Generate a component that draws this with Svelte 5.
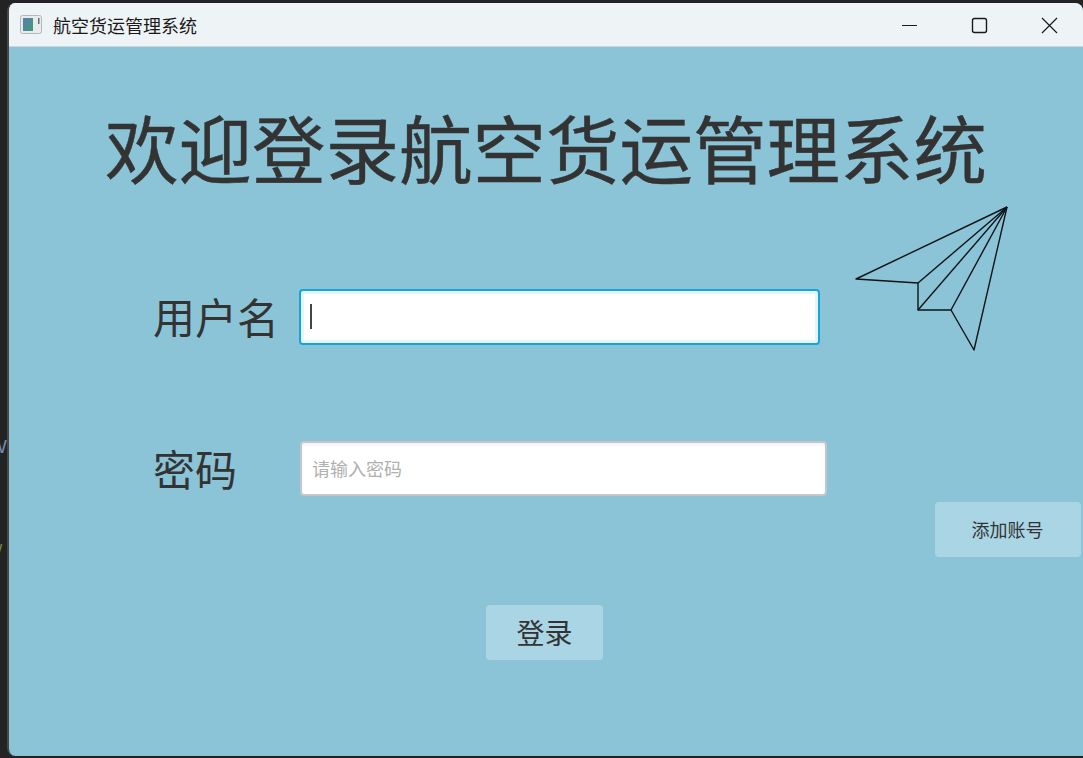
<script lang="ts">
	// Plane outline, one line per fold
	const planeLines = [
		'M152 2 L1 74 L63 78 L63 105 L96 105 L119 145 L152 2',
		'M152 2 L63 78',
		'M152 2 L63 105',
		'M152 2 L96 105'
	]
</script>


<div class="desktop">
	<div class="backdrop-text">
		<span class="stray-w">W</span>
		<span class="stray-mark">/</span>
	</div>

	<main class="window">
		<header class="titlebar">
			<svg class="app-icon" width="22" height="20" viewBox="0 0 22 20">
				<defs>
					<linearGradient id="icon-fill" x1="0" y1="0" x2="1" y2="1">
						<stop offset="0" stop-color="#5b7fa8" />
						<stop offset="1" stop-color="#3f9a80" />
					</linearGradient>
				</defs>
				<rect x="0.5" y="0.5" width="21" height="18" rx="2" fill="#e9eaea" stroke="#b4b8ba" />
				<rect x="3" y="3" width="10" height="13" fill="url(#icon-fill)" />
				<rect x="18" y="3" width="1.5" height="6" fill="#5f6f78" />
			</svg>
			<span class="title">航空货运管理系统</span>

			<div class="controls">
				<svg width="70" height="20" viewBox="0 0 70 20">
					<path d="M28 10.5 H43" stroke="#1a1a1a" stroke-width="1.2" fill="none" />
				</svg>
				<svg width="70" height="20" viewBox="0 0 70 20">
					<rect x="28.5" y="3.5" width="14" height="14" rx="2" stroke="#1a1a1a" stroke-width="1.4" fill="none" />
				</svg>
				<svg width="70" height="20" viewBox="0 0 70 20">
					<path d="M28 3 L43 18 M43 3 L28 18" stroke="#1a1a1a" stroke-width="1.2" fill="none" />
				</svg>
			</div>
		</header>

		<section class="content">
			<h1>欢迎登录航空货运管理系统</h1>

			<svg class="plane" width="154" height="146" viewBox="0 0 154 146">
				{#each planeLines as d}
					<path {d} fill="none" stroke="#0d1417" stroke-width="1.4" stroke-linejoin="round" />
				{/each}
			</svg>

			<div class="row username">
				<label for="username">用户名</label>
				<div class="field focused">
					<input id="username" type="text" />
					<span class="caret"></span>
				</div>
			</div>

			<div class="row password">
				<label for="password">密码</label>
				<div class="field">
					<input id="password" type="password" placeholder="请输入密码" />
				</div>
			</div>

			<div class="add-row">
				<button class="add">添加账号</button>
			</div>

			<div class="login-row">
				<button class="login">登录</button>
			</div>
		</section>
	</main>
</div>


<style>
	:global(body) {
		background: #232323;
	}

	.desktop {
		position: relative;
		width: 1083px;
		height: 758px;
		box-sizing: border-box;
		padding: 3px 0 2px 7px;
		overflow: hidden;
		background: #232323;
		font-family: "Noto Sans CJK SC", "Liberation Sans", sans-serif;
	}

	.backdrop-text span {
		position: absolute;
		font-family: "Liberation Sans", sans-serif;
		font-size: 19px;
		line-height: 20px;
	}

	.stray-w {
		left: -11px;
		top: 437px;
		color: #6f8bb5;
	}

	.stray-mark {
		left: -3px;
		top: 541px;
		color: #6f8f3f;
	}

	.window {
		position: relative;
		display: flex;
		flex-direction: column;
		height: 100%;
		box-sizing: border-box;
		border-left: 2px solid #474747;
		border-radius: 8px 8px 0 8px;
		overflow: hidden;
		background: #8bc3d7;
	}

	.titlebar {
		display: flex;
		align-items: center;
		flex: none;
		height: 44px;
		box-sizing: border-box;
		padding-left: 11px;
		background: #eef3f6;
		border-bottom: 1px solid #c9d6dc;
	}

	.app-icon {
		flex: none;
	}

	.title {
		margin-left: 11px;
		font-size: 18px;
		color: #1a1a1a;
	}

	.controls {
		display: flex;
		margin-left: auto;
		margin-right: -1px;
	}

	.content {
		position: relative;
		flex: 1;
		min-height: 0;
	}

	h1 {
		margin: 0;
		padding-top: 62px;
		height: 74px;
		line-height: 74px;
		font-size: 73.5px;
		font-weight: 400;
		text-align: center;
		color: #333333;
		-webkit-text-stroke: 0.4px #333333;
	}

	.plane {
		position: absolute;
		left: 846px;
		top: 158px;
	}

	.row {
		display: flex;
		align-items: center;
		height: 55px;
		padding-left: 144px;
	}

	.username {
		margin-top: 106px;
	}

	.password {
		margin-top: 97px;
	}

	label {
		width: 147px;
		flex: none;
		font-size: 42px;
		line-height: 55px;
		color: #333333;
		transform: translateY(-1px);
	}

	.field {
		position: relative;
		width: 527px;
		height: 55px;
	}

	.field.focused {
		width: 521px;
		height: 56px;
		margin-left: -1px;
	}

	input {
		display: block;
		width: 100%;
		height: 100%;
		box-sizing: border-box;
		padding: 0 10px 2px;
		border: 2px solid #c4c7ca;
		border-radius: 4px;
		outline: none;
		background: #ffffff;
		box-shadow: inset 0 2px 3px rgba(0, 0, 0, 0.06);
		font-family: inherit;
		font-size: 18px;
		color: #333333;
	}

	input::placeholder {
		color: #b0b0b0;
		opacity: 1;
	}

	.focused input {
		border-color: #16a5d8;
		box-shadow: inset 0 0 0 3px #e6f5fb;
	}

	.caret {
		position: absolute;
		left: 11px;
		top: 15px;
		width: 2px;
		height: 25px;
		background: #444444;
	}

	.add-row {
		display: flex;
		justify-content: flex-end;
		margin-top: 6px;
		padding-right: 2px;
	}

	button {
		height: 55px;
		border: none;
		border-radius: 4px;
		background: #a9d5e5;
		font-family: inherit;
		color: #333333;
		padding: 0 0 2px;
	}

	.add {
		width: 146px;
		padding-right: 1px;
		font-size: 18px;
	}

	.login-row {
		margin-top: 48px;
		padding-left: 477px;
	}

	.login {
		width: 117px;
		font-size: 28px;
	}
</style>
